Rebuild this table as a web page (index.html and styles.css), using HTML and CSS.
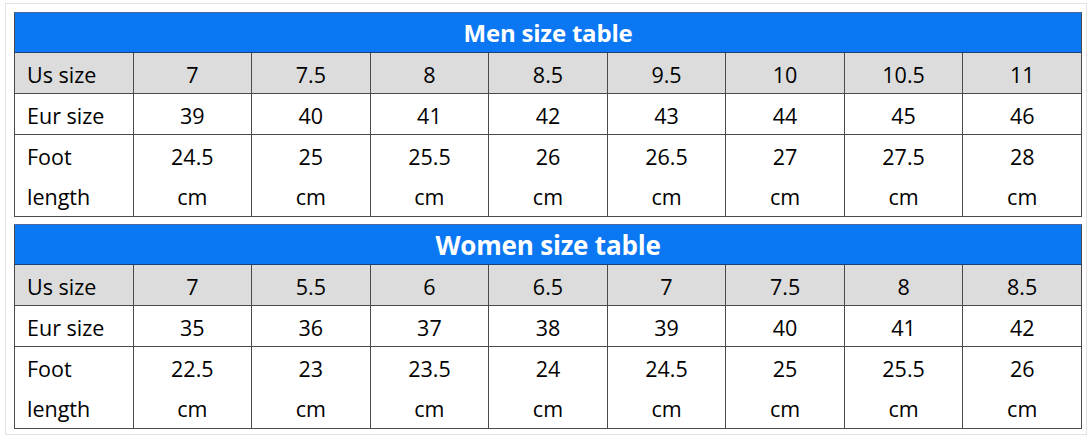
FILE: index.html
```html
<!DOCTYPE html>
<html>
<head>
<meta charset="utf-8">
<link rel="stylesheet" href="styles.css">
</head>
<body>
<div class="frame">
  <table class="size-table">
    <thead>
      <tr><th class="title" colspan="9">Men size table</th></tr>
    </thead>
    <tbody>
      <tr class="us"><td class="label">Us size</td><td>7</td><td>7.5</td><td>8</td><td>8.5</td><td>9.5</td><td>10</td><td>10.5</td><td>11</td></tr>
      <tr><td class="label">Eur size</td><td>39</td><td>40</td><td>41</td><td>42</td><td>43</td><td>44</td><td>45</td><td>46</td></tr>
      <tr class="foot"><td class="label">Foot<br>length</td><td>24.5<br>cm</td><td>25<br>cm</td><td>25.5<br>cm</td><td>26<br>cm</td><td>26.5<br>cm</td><td>27<br>cm</td><td>27.5<br>cm</td><td>28<br>cm</td></tr>
    </tbody>
  </table>
  <table class="size-table second">
    <thead>
      <tr><th class="title big" colspan="9">Women size table</th></tr>
    </thead>
    <tbody>
      <tr class="us"><td class="label">Us size</td><td>7</td><td>5.5</td><td>6</td><td>6.5</td><td>7</td><td>7.5</td><td>8</td><td>8.5</td></tr>
      <tr><td class="label">Eur size</td><td>35</td><td>36</td><td>37</td><td>38</td><td>39</td><td>40</td><td>41</td><td>42</td></tr>
      <tr class="foot"><td class="label">Foot<br>length</td><td>22.5<br>cm</td><td>23<br>cm</td><td>23.5<br>cm</td><td>24<br>cm</td><td>24.5<br>cm</td><td>25<br>cm</td><td>25.5<br>cm</td><td>26<br>cm</td></tr>
    </tbody>
  </table>
</div>
</body>
</html>
```
FILE: styles.css
```css
html, body {
  margin: 0;
  padding: 0;
  background: #ffffff;
}

body {
  font-family: "Open Sans", "Liberation Sans", sans-serif;
  color: #000000;
}

.frame {
  margin: 3px 5px 0 5px;
  width: 1068px;
  border: 1px solid #e2e2e2;
  padding: 8px 4px 5px 8px;
  background: #ffffff;
}

.size-table {
  width: 1068px;
  border-collapse: collapse;
  table-layout: fixed;
  border: 1px solid #4a4a4a;
}

.size-table.second {
  margin-top: 7px;
}

.title {
  height: 40px;
  padding: 0;
  box-sizing: border-box;
  background: #0b77f3;
  color: #ffffff;
  font-weight: 700;
  font-size: 24px;
  line-height: 38px;
  text-align: center;
  border-top: 1px solid #4a6aa0;
  border-bottom: 1px solid #1d3f72;
  letter-spacing: -0.2px;
}

.title.big {
  font-size: 26px;
}

.size-table td {
  height: 41px;
  padding: 3px 0 0 0;
  box-sizing: border-box;
  border: 1px solid #4a4a4a;
  text-align: center;
  font-size: 21.5px;
  line-height: 37px;
  vertical-align: middle;
}

.size-table tr.us td {
  background: #dcdcdc;
}

.size-table tr.foot td {
  height: 82px;
  padding-top: 2px;
  line-height: 39.5px;
}

.size-table tr td.label {
  text-align: left;
  padding-left: 12px;
}
```
